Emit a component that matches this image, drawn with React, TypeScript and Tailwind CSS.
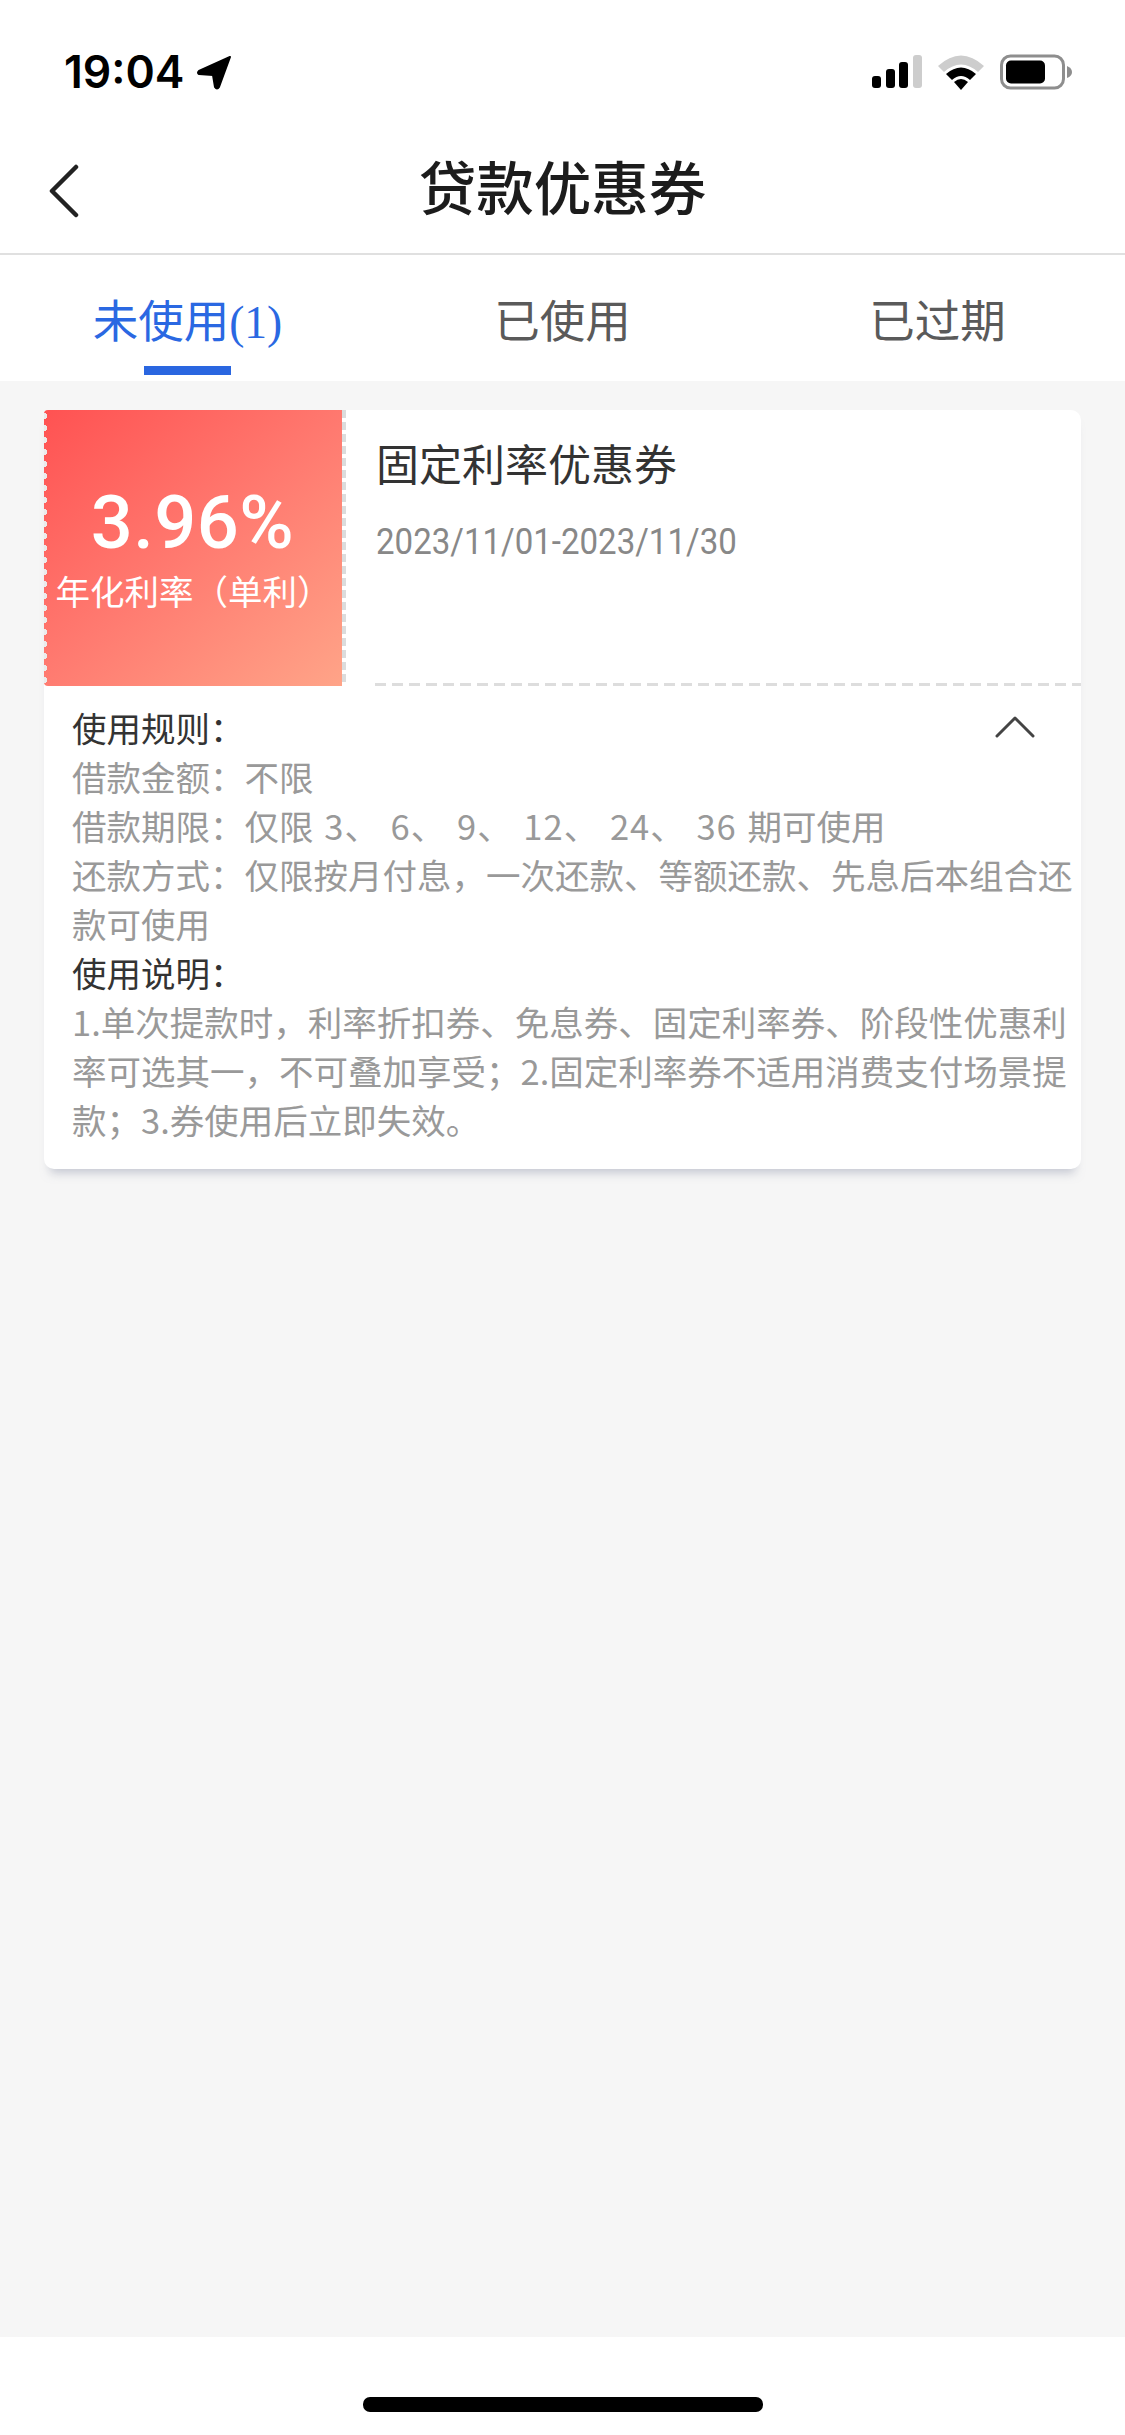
import { useState } from 'react'

const cjk = "font-['Noto_Sans_CJK_SC','Noto_Sans',sans-serif]"

const tabs = ['未使用', '已使用', '已过期']

function StatusBar() {
  return (
    <div className="h-[142px] flex items-start justify-between pt-[50px] pl-[64px] pr-[52px]">
      <div className="flex items-center gap-[12px]">
        <span className="font-['Inter',sans-serif] font-semibold text-[44.5px] leading-[44px] text-black">19:04</span>
        <svg width="36" height="36" viewBox="0 0 36 36">
          <path d="M34 3 L3 17 Q1 19 3 20 L17 21 L19 33 Q21 36 23 33 Z" fill="#000" stroke="#000" strokeWidth="2" strokeLinejoin="round" />
        </svg>
      </div>
      <div className="flex items-center gap-[15px] mt-[4px] mr-[1px]">
        <svg width="50" height="34" viewBox="0 0 50 34">
          <rect x="0" y="21" width="9" height="12" rx="3" fill="#000" />
          <rect x="14" y="14" width="9" height="19" rx="3" fill="#000" />
          <rect x="27" y="7" width="9" height="26" rx="3" fill="#000" />
          <rect x="41" y="0" width="9" height="33" rx="3" fill="#cdcdcd" />
        </svg>
        <svg width="48" height="36" viewBox="0 0 48 36">
          <path d="M1 12 Q24 -9 47 12 L41 18 Q24 3 7 18 Z" fill="#cdcdcd" />
          <path d="M9 20 Q24 7 39 20 L33 26 Q24 18 15 26 Z" fill="#000" />
          <path d="M17 28 Q24 22 31 28 L24 36 Z" fill="#000" />
        </svg>
        <svg width="72" height="36" viewBox="0 0 72 36">
          <rect x="1.5" y="2" width="62" height="32" rx="9" fill="none" stroke="#8e8e8e" strokeWidth="3" />
          <rect x="6" y="6.5" width="39" height="23" rx="5" fill="#000" />
          <path d="M67 12 Q72 14 72 18 Q72 22 67 24 Z" fill="#8e8e8e" />
        </svg>
      </div>
    </div>
  )
}

function NavBar() {
  return (
    <div className="relative h-[113px] border-b-[2px] border-[#e0e0e0] flex items-start justify-center">
      <svg className="absolute left-[48px] top-[22px]" width="32" height="54" viewBox="0 0 32 54">
        <path d="M28 3 L4 27 L28 51" fill="none" stroke="#222222" strokeWidth="4.5" strokeLinecap="round" strokeLinejoin="round" />
      </svg>
      <h1 className={`${cjk} text-[57.5px] leading-[76px] mt-[5px] font-medium text-[#1c1c1c]`}>贷款优惠券</h1>
    </div>
  )
}

function Tabs() {
  const [active, setActive] = useState(0)
  return (
    <div className="grid grid-cols-3 h-[126px] bg-white">
      {tabs.map((t, i) => (
        <button key={t} onClick={() => setActive(i)} className="relative flex justify-center pt-[33px]">
          <span className={`${cjk} text-[45.5px] leading-[60px] ${i === active ? 'text-[#2a68e2]' : 'text-[#5a5a5a]'}`}>
            {t}
            {i === 0 && <span className="font-['Liberation_Serif',serif]">(1)</span>}
          </span>
          {i === active && <span className="absolute left-[144px] top-[111px] w-[87px] h-[9px] bg-[#2a66e0]" />}
        </button>
      ))}
    </div>
  )
}

function Ticket() {
  return (
    <div className="relative w-[299px] h-[276px] rounded-l-[4px] bg-[linear-gradient(140deg,#ff5252_0%,#ff7a70_50%,#ffa488_100%)] flex flex-col items-center pt-[69px]">
      <span className="absolute left-0 top-0 h-full w-[4px] bg-[radial-gradient(circle_at_0_50%,#ebebeb_0,#ebebeb_3px,transparent_3.5px)] bg-[length:4px_12px]" />
      <span className="absolute right-[-3px] top-0 h-full w-[4px] bg-[repeating-linear-gradient(180deg,#dcdcdc_0,#dcdcdc_8px,#ffffff_8px,#ffffff_12px)]" />
      <span className="font-['Roboto',sans-serif] font-medium text-[74px] leading-[88px] text-white tracking-[0.5px] -ml-[2px]">3.96%</span>
      <span className={`${cjk} text-[34.5px] leading-[46px] text-white whitespace-nowrap`}>年化利率（单利）</span>
    </div>
  )
}

function Card() {
  return (
    <div className="bg-white rounded-[10px] shadow-[0_10px_10px_-6px_rgba(150,155,175,0.5)]">
      <div className="flex h-[276px]">
        <Ticket />
        <div className="flex-1 pl-[33px] relative">
          <div className={`${cjk} text-[43px] leading-[56px] mt-[24px] text-[#333333]`}>固定利率优惠券</div>
          <div className="font-['Roboto',sans-serif] text-[37px] leading-[40px] mt-[32px] text-[#888888] whitespace-nowrap origin-left scale-x-[0.893]">2023/11/01-2023/11/30</div>
          <div className="absolute left-[32px] right-0 bottom-0 h-[3px] bg-[repeating-linear-gradient(90deg,#dddddd_0,#dddddd_11px,transparent_11px,transparent_17px)]" />
        </div>
      </div>
      <div className={`relative ${cjk} text-[34.5px] leading-[49px] pl-[28px] pr-[4px] pt-[17px] pb-[25px] text-[#999999]`}>
        <svg className="absolute right-[46px] top-[30px]" width="40" height="22" viewBox="0 0 40 22">
          <path d="M2 20 L20 2 L38 20" fill="none" stroke="#444444" strokeWidth="3" strokeLinecap="round" strokeLinejoin="round" />
        </svg>
        <div className="text-[#333333]">使用规则：</div>
        <div>借款金额：不限</div>
        <div>
          借款期限：仅限
          <span className="tracking-[1px] [word-spacing:2px]"> 3、 6、 9、 12、 24、 36 </span>
          期可使用
        </div>
        <div>还款方式：仅限按月付息，一次还款、等额还款、先息后本组合还款可使用</div>
        <div className="text-[#333333]">使用说明：</div>
        <div>1.单次提款时，利率折扣券、免息券、固定利率券、阶段性优惠利率可选其一，不可叠加享受；2.固定利率券不适用消费支付场景提款；3.券使用后立即失效。</div>
      </div>
    </div>
  )
}

export default function App() {
  return (
    <div className="w-[1125px] h-[2435px] flex flex-col bg-white">
      <StatusBar />
      <NavBar />
      <Tabs />
      <main className="flex-1 bg-[#f6f6f6] pt-[29px] pl-[44px] pr-[44px]">
        <Card />
      </main>
      <div className="h-[98px] bg-white flex justify-center pt-[60px]">
        <div className="w-[400px] h-[15px] rounded-[7px] bg-black" />
      </div>
    </div>
  )
}
